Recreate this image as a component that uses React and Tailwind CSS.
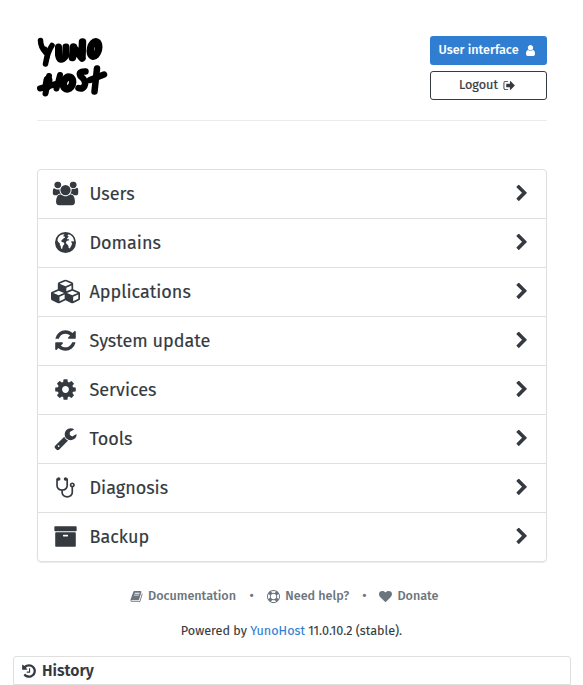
const ICONS = {
  user: [1280, "M1280 1399q0 109-62.5 187t-150.5 78h-854q-88 0-150.5-78t-62.5-187q0-85 8.5-160.5t31.5-152 58.5-131 94-89 134.5-34.5q131 128 313 128t313-128q76 0 134.5 34.5t94 89 58.5 131 31.5 152 8.5 160.5zm-256-887q0 159-112.5 271.5t-271.5 112.5-271.5-112.5-112.5-271.5 112.5-271.5 271.5-112.5 271.5 112.5 112.5 271.5z"],
  users: [1920, "M593 896q-162 5-265 128h-134q-82 0-138-40.5t-56-118.5q0-353 124-353 6 0 43.5 21t97.5 42.5 119 21.5q67 0 133-23-5 37-5 66 0 159 93 293zm1071 637q0 120-73 189.5t-194 69.5h-874q-121 0-194-69.5t-73-189.5q0-53 3.5-103.5t14-109 26.5-108.5 43-97.5 62-81 85.5-53.5 111.5-20q10 0 43 21.5t73 48 107 48 135 21.5 135-21.5 107-48 73-48 43-21.5q61 0 111.5 20t85.5 53.5 62 81 43 97.5 26.5 108.5 14 109 3.5 103.5zm-1024-1277q0 106-75 181t-181 75-181-75-75-181 75-181 181-75 181 75 75 181zm704 384q0 159-112.5 271.5t-271.5 112.5-271.5-112.5-112.5-271.5 112.5-271.5 271.5-112.5 271.5 112.5 112.5 271.5zm576 225q0 78-56 118.5t-138 40.5h-134q-103-123-265-128 93-134 93-293 0-29-5-66 66 23 133 23 59 0 119-21.5t97.5-42.5 43.5-21q124 0 124 353zm-128-609q0 106-75 181t-181 75-181-75-75-181 75-181 181-75 181 75 75 181z"],
  cubes: [2176, "M640 1632l384-192v-314l-384 164v342zm-64-454l404-173-404-173-404 173zm1088 454l384-192v-314l-384 164v342zm-64-454l404-173-404-173-404 173zm-448-293l384-165v-266l-384 164v267zm-64-379l441-189-441-189-441 189zm1088 518v416q0 36-19 67t-52 47l-448 224q-25 14-57 14t-57-14l-448-224q-4-2-7-4-2 2-7 4l-448 224q-25 14-57 14t-57-14l-448-224q-33-16-52-47t-19-67v-416q0-38 21.5-70t56.5-48l434-186v-400q0-38 21.5-70t56.5-48l448-192q23-10 50-10t50 10l448 192q35 16 56.5 48t21.5 70v400l434 186q36 16 57 48t21 70z"],
  refresh: [1792, "M1639 1056q0 5-1 7-64 268-268 434.5t-478 166.5q-146 0-282.5-55t-243.5-157l-129 129q-19 19-45 19t-45-19-19-45v-448q0-26 19-45t45-19h448q26 0 45 19t19 45-19 45l-137 137q71 66 161 102t187 36q134 0 250-65t186-179q11-17 53-117 8-23 30-23h192q13 0 22.5 9.5t9.5 22.5zm25-800v448q0 26-19 45t-45 19h-448q-26 0-45-19t-19-45 19-45l138-138q-148-137-349-137-134 0-250 65t-186 179q-11 17-53 117-8 23-30 23h-199q-13 0-22.5-9.5t-9.5-22.5v-7q65-268 270-434.5t480-166.5q146 0 284 55.5t245 156.5l130-129q19-19 45-19t45 19 19 45z"],
  cog: [1792, "M1152 896q0-106-75-181t-181-75-181 75-75 181 75 181 181 75 181-75 75-181zm512-109v222q0 12-8 23t-20 13l-185 28q-19 54-39 91 35 50 107 138 10 12 10 25t-9 23q-27 37-99 108t-94 71q-12 0-26-9l-138-108q-44 23-91 38-16 136-29 186-7 28-36 28h-222q-14 0-24.5-8.5t-11.5-21.5l-28-184q-49-16-90-37l-141 107q-10 9-25 9-14 0-25-11-126-114-165-168-7-10-7-23 0-12 8-23 15-21 51-66.5t54-70.5q-27-50-41-99l-183-27q-13-2-21-12.5t-8-23.5v-222q0-12 8-23t19-13l186-28q14-46 39-92-40-57-107-138-10-12-10-24 0-10 9-23 26-36 98.5-107.5t94.5-71.5q13 0 26 10l138 107q44-23 91-38 16-136 29-186 7-28 36-28h222q14 0 24.5 8.5t11.5 21.5l28 184q49 16 90 37l142-107q9-9 24-9 13 0 25 10 129 119 165 170 7 8 7 22 0 12-8 23-15 21-51 66.5t-54 70.5q26 50 41 98l183 28q13 2 21 12.5t8 23.5z"],
  wrench: [1792, "M448 1472q0-26-19-45t-45-19-45 19-19 45 19 45 45 19 45-19 19-45zm644-420l-682 682q-37 37-90 37-52 0-91-37l-106-108q-38-36-38-90 0-53 38-91l681-681q39 98 114.5 173.5t173.5 114.5zm634-435q0 39-23 106-47 134-164.5 217.5t-258.5 83.5q-185 0-316.5-131.5t-131.5-316.5 131.5-316.5 316.5-131.5q58 0 121.5 16.5t107.5 46.5q16 11 16 28t-16 28l-293 169v224l193 107q5-3 79-48.5t135.5-81 70.5-35.5q15 0 23.5 10t8.5 25z"],
  stethoscope: [1664, "M1408 704q0-26-19-45t-45-19-45 19-19 45 19 45 45 19 45-19 19-45zm128 0q0 62-35.5 111t-92.5 70v395q0 159-131.5 271.5t-316.5 112.5-316.5-112.5-131.5-271.5v-132q-164-20-274-128t-110-252v-512q0-26 19-45t45-19q6 0 16 2 17-30 47-48t65-18q53 0 90.5 37.5t37.5 90.5-37.5 90.5-90.5 37.5q-33 0-64-18v402q0 106 94 181t226 75 226-75 94-181v-402q-31 18-64 18-53 0-90.5-37.5t-37.5-90.5 37.5-90.5 90.5-37.5q35 0 65 18t47 48q10-2 16-2 26 0 45 19t19 45v512q0 144-110 252t-274 128v132q0 106 94 181t226 75 226-75 94-181v-395q-57-21-92.5-70t-35.5-111q0-80 56-136t136-56 136 56 56 136z"],
  archive: [1792, "M1088 832q0-26-19-45t-45-19h-256q-26 0-45 19t-19 45 19 45 45 19h256q26 0 45-19t19-45zm576-192v960q0 26-19 45t-45 19h-1408q-26 0-45-19t-19-45v-960q0-26 19-45t45-19h1408q26 0 45 19t19 45zm64-448v256q0 26-19 45t-45 19h-1536q-26 0-45-19t-19-45v-256q0-26 19-45t45-19h1536q26 0 45 19t19 45z"],
  chevron: [1792, "M1363 877l-742 742q-19 19-45 19t-45-19l-166-166q-19-19-19-45t19-45l531-531-531-531q-19-19-19-45t19-45l166-166q19-19 45-19t45 19l742 742q19 19 19 45t-19 45z"],
  signout: [1664, "M704 1440q0 4 1 20t.5 26.5-3 23.5-10 19.5-20.5 6.5h-320q-119 0-203.5-84.5t-84.5-203.5v-704q0-119 84.5-203.5t203.5-84.5h320q13 0 22.5 9.5t9.5 22.5q0 4 1 20t.5 26.5-3 23.5-10 19.5-20.5 6.5h-320q-66 0-113 47t-47 113v704q0 66 47 113t113 47h312l11.5 1 11.5 3 8 5.5 7 9 2 13.5zm928-544q0 26-19 45l-544 544q-19 19-45 19t-45-19-19-45v-288h-448q-26 0-45-19t-19-45v-384q0-26 19-45t45-19h448v-288q0-26 19-45t45-19 45 19l544 544q19 19 19 45z"],
  book: [1792, "M1703 478q40 57 18 129l-275 906q-19 64-76.5 107.5t-122.5 43.5h-923q-77 0-148.5-53.5t-99.5-131.5q-24-67-2-127 0-4 3-27t4-37q1-8-3-21.5t-3-19.5q2-11 8-21t16.5-23.5 16.5-23.5q23-38 45-91.5t30-91.5q3-10 .5-30t-.5-28q3-11 17-28t17-23q21-36 42-92t25-90q1-9-2.5-32t.5-28q4-13 22-30.5t22-22.5q19-26 42.5-84.5t27.5-96.5q1-8-3-25.5t-2-26.5q2-8 9-18t18-23 17-21q8-12 16.5-30.5t15-35 16-36 19.5-32 26.5-23.5 36-11.5 47.5 5.5l-1 3q38-9 51-9h761q74 0 114 56t18 130l-274 906q-36 119-71.5 153.5t-128.5 34.5h-869q-27 0-38 15-11 16-1 43 24 70 144 70h923q29 0 56-15.5t35-41.5l300-987q7-22 5-57 38 15 59 43zm-1064 2q-4 13 2 22.5t20 9.5h608q13 0 25.5-9.5t16.5-22.5l21-64q4-13-2-22.5t-20-9.5h-608q-13 0-25.5 9.5t-16.5 22.5zm-83 256q-4 13 2 22.5t20 9.5h608q13 0 25.5-9.5t16.5-22.5l21-64q4-13-2-22.5t-20-9.5h-608q-13 0-25.5 9.5t-16.5 22.5z"],
  ring: [1792, "M896 0q182 0 348 71t286 191 191 286 71 348-71 348-191 286-286 191-348 71-348-71-286-191-191-286-71-348 71-348 191-286 286-191 348-71zm0 128q-190 0-361 90l194 194q82-28 167-28t167 28l194-194q-171-90-361-90zm-678 1129l194-194q-28-82-28-167t28-167l-194-194q-90 171-90 361t90 361zm678 407q190 0 361-90l-194-194q-82 28-167 28t-167-28l-194 194q171 90 361 90zm0-384q159 0 271.5-112.5t112.5-271.5-112.5-271.5-271.5-112.5-271.5 112.5-112.5 271.5 112.5 271.5 271.5 112.5zm484-217l194 194q90-171 90-361t-90-361l-194 194q28 82 28 167t-28 167z"],
  heart: [1792, "M896 1664q-26 0-44-18l-624-602q-10-8-27.5-26t-55.5-65.5-68-97.5-53.5-121-23.5-138q0-220 127-344t351-124q62 0 126.5 21.5t120 58 95.5 68.5 76 68q36-36 76-68t95.5-68.5 120-58 126.5-21.5q224 0 351 124t127 344q0 221-229 450l-623 600q-18 18-44 18z"],
  history: [1792, "M1664 896q0 156-61 298t-164 245-245 164-298 61q-172 0-327-72.5t-264-204.5q-7-10-6.5-22.5t8.5-20.5l137-138q10-9 25-9 16 2 23 12 73 95 179 147t225 52q104 0 198.5-40.5t163.5-109.5 109.5-163.5 40.5-198.5-40.5-198.5-109.5-163.5-163.5-109.5-198.5-40.5q-98 0-188 35.5t-160 101.5l137 138q31 30 14 69-17 40-59 40h-448q-26 0-45-19t-19-45v-448q0-42 40-59 39-17 69 14l130 129q107-101 244.5-156.5t284.5-55.5q156 0 298 61t245 164 164 245 61 298zm-640-288v448q0 14-9 23t-23 9h-320q-14 0-23-9t-9-23v-64q0-14 9-23t23-9h224v-352q0-14 9-23t23-9h64q14 0 23 9t9 23z"],
  globe: [1792, "M896 110a786 786 0 1 0 0 1572a786 786 0 1 0 0-1572zM650 290L820 280L740 400L760 460L850 440L860 530L740 590L650 690L560 790L640 860L780 910L810 1010L740 1100L680 1220L640 1400L560 1320L540 1170L470 1050L470 950L350 850L300 740L320 600L410 450L510 360zM1090 290L1240 320L1400 450L1490 600L1530 780L1470 840L1390 780L1310 840L1380 950L1360 1080L1290 1190L1220 1340L1130 1290L1110 1150L1060 1060L970 1010L930 910L970 800L1070 750L1180 740L1150 660L1030 650L1010 580L1100 510L1140 440L1040 390z"],
};

function Icon({ name, className }) {
  const [width, d] = ICONS[name];
  return (
    <svg className={className} viewBox={`0 0 ${width} 1792`} fill="currentColor" fillRule={name === "globe" ? "evenodd" : "nonzero"} aria-hidden="true">
      <path d={d} />
    </svg>
  );
}

function Logo() {
  return (
    <svg className="h-[62px] w-[70px] overflow-visible" viewBox="0 0 70 62" fill="none" stroke="#000" strokeWidth="7.5" strokeLinecap="round" strokeLinejoin="round" aria-label="YunoHost">
      <path strokeWidth="5.5" d="M3.500 4.500Q3.500 11 9 17M15 9.500Q10.500 16 8.500 28" />
      <path strokeWidth="5" d="M8 13L10.500 18L9.500 24" />
      <path strokeWidth="7" d="M21.500 11V19Q23 27 28.500 20L29 11" />
      <path d="M35.500 21.500L36.500 11M37 12L45 22M45 21L45.500 6" />
      <ellipse cx="57.500" cy="13" rx="4" ry="7.300" transform="rotate(14 57.500 13)" />
      <path strokeWidth="6" d="M12 40L8.500 57.500M3 52.500L19 48M23 39L19.500 52.500" />
      <path strokeWidth="9" d="M10 50L11 44" />
      <ellipse cx="31" cy="47" rx="4.500" ry="6" transform="rotate(20 31 47)" />
      <path strokeWidth="6.500" d="M48.500 35.500Q41 35 43.500 40Q50 45.500 47.500 50Q45 53.500 41.500 52" />
      <path strokeWidth="6.500" d="M60 32.500L57.500 55.500" />
      <path strokeWidth="6.500" d="M53 44L67 38.500" />
    </svg>
  );
}

const MENU = [
  ["users", "Users", "w-[26px]"],
  ["globe", "Domains", "w-6"],
  ["cubes", "Applications", "w-[29px] translate-x-[0.5px]"],
  ["refresh", "System update", "w-6"],
  ["cog", "Services", "w-6"],
  ["wrench", "Tools", "w-6"],
  ["stethoscope", "Diagnosis", "w-[22px]"],
  ["archive", "Backup", "w-6"],
];

export default function App() {
  return (
    <div className="h-[685px] overflow-hidden bg-white font-['Fira_Sans','Noto_Sans',sans-serif] text-[#343a40]">
      <div className="mx-[37px] w-[510px]">
        <header className="flex h-[121px] items-start justify-between border-b border-[#ebebeb] pt-9">
          <Logo />
          <div className="flex w-[117px] flex-col gap-1.5">
            <button className="flex h-[29px] items-center justify-center gap-[7px] rounded-[3px] bg-[#2f7ed2] pr-1 pb-px text-[12.6px] font-medium text-white">
              <span className="whitespace-nowrap">User interface</span>
              <Icon name="user" className="h-[13px] w-[9px]" />
            </button>
            <button className="flex h-[29px] items-center justify-center gap-[5px] rounded-[3px] border border-[#343a40] pr-[3px] pb-px text-[12.6px]">
              <span className="[-webkit-text-stroke:0.2px]">Logout</span>
              <Icon name="signout" className="h-[13px] w-3" />
            </button>
          </div>
        </header>

        <nav className="mt-12 divide-y divide-[#dfdfdf] rounded border border-[#dfdfdf] shadow-[0_1px_1px_#e9ecef]">
          {MENU.map(([icon, label, width]) => (
            <a key={label} className="flex h-[49px] items-center pr-3 pl-[13px] last:h-12">
              <span className="flex w-[29px] -translate-x-[0.5px] -translate-y-[0.5px] justify-center">
                <Icon name={icon} className={`h-6 shrink-0 ${width}`} />
              </span>
              <span className="ml-[9.5px] flex-1 text-lg [-webkit-text-stroke:0.15px]">{label}</span>
              <Icon name="chevron" className="h-[18px] w-6 -translate-y-[0.5px]" />
            </a>
          ))}
        </nav>
      </div>

      <footer className="mt-[26px] text-center text-[12.6px]">
        <div className="flex h-4 items-center pl-[130px] font-medium text-[#6c757d]">
          <Icon name="book" className="mr-[5px] h-[13px] w-[13px]" />
          <span>Documentation</span>
          <span className="mx-[13.5px]">•</span>
          <Icon name="ring" className="mr-[5px] h-[13px] w-[13px]" />
          <span>Need help?</span>
          <span className="mx-[13px]">•</span>
          <Icon name="heart" className="mr-[5px] h-[13px] w-[13px]" />
          <span>Donate</span>
        </div>
        <p className="mt-[19px] h-4 leading-4 [-webkit-text-stroke:0.1px]">
          Powered by <a className="text-[#2f7ed2]">YunoHost</a> 11.0.10.2 (stable).
        </p>
      </footer>

      <section className="mx-[13px] mt-[17px] flex h-[29px] w-[558px] items-center gap-[5px] rounded-t-[3px] border border-[#dfdfdf] pl-[7px]">
        <Icon name="history" className="h-4 w-4" />
        <h2 className="text-[15.75px] font-semibold">History</h2>
      </section>
    </div>
  );
}
